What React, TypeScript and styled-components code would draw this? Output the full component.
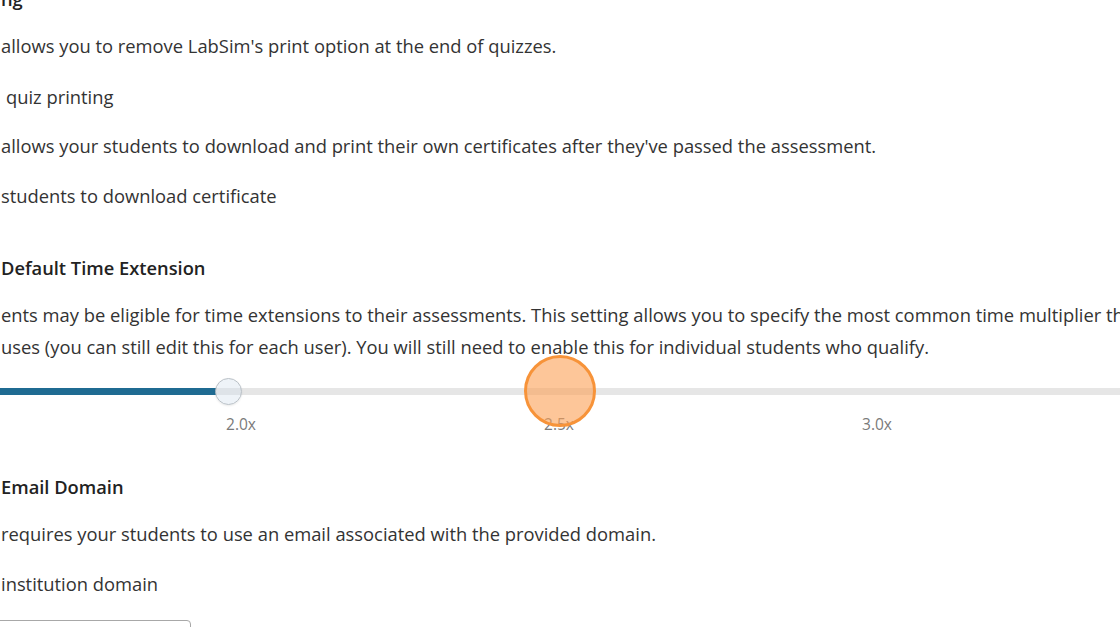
import React from 'react';
import styled, { createGlobalStyle } from 'styled-components';

const GlobalStyle = createGlobalStyle`
  html, body {
    margin: 0;
    padding: 0;
    background: #ffffff;
    overflow: hidden;
  }
  body {
    font-family: "Open Sans", "Noto Sans", sans-serif;
    color: #333333;
  }
`;

const Page = styled.div`
  width: 1120px;
  height: 627px;
  overflow: hidden;
  position: relative;
`;

const Content = styled.div`
  margin-top: -18px;
  padding-left: 1px;
  display: flex;
  flex-direction: column;
`;

const Heading = styled.h3<{ $gap?: number }>`
  margin: ${(p) => p.$gap || 0}px 0 0 0;
  font-size: 18.3px;
  font-weight: 600;
  line-height: 33px;
  color: #222222;
  white-space: nowrap;
`;

const Text = styled.p<{ $gap: number; $indent?: number }>`
  margin: ${(p) => p.$gap}px 0 0 ${(p) => p.$indent || 0}px;
  font-size: 18.35px;
  font-weight: 400;
  line-height: 33px;
  color: #333333;
  white-space: nowrap;
`;

const SliderArea = styled.div`
  position: relative;
  margin-top: 25px;
  width: 1200px;
`;

const Track = styled.div`
  position: relative;
  height: 7px;
  background: #e6e6e6;
  border-radius: 4px;
`;

const Fill = styled.div`
  position: absolute;
  left: -10px;
  top: 0;
  bottom: 0;
  background: #1f6b92;
`;

const Thumb = styled.div`
  position: absolute;
  top: 50%;
  width: 25px;
  height: 25px;
  margin: -13.5px 0 0 -13.5px;
  border-radius: 50%;
  border: 1px solid #b9c0c6;
  background: rgba(205, 222, 234, 0.35);
  box-shadow: 0 1px 2px rgba(0, 0, 0, 0.08);
`;

const Ticks = styled.div`
  display: flex;
  margin-top: 19px;
  margin-left: 81px;
`;

const Tick = styled.span`
  width: 318px;
  text-align: center;
  font-size: 15.5px;
  line-height: 20px;
  color: #7a7a7a;
`;

const Cursor = styled.div`
  position: absolute;
  width: 66px;
  height: 66px;
  border-radius: 50%;
  border: 3px solid #f79339;
  background: rgba(252, 160, 85, 0.6);
  transform: translate(-50%, -50%);
`;

const Input = styled.div`
  margin: 20px 0 0 -12px;
  width: 200px;
  height: 36px;
  border: 1px solid #a8a8a8;
  border-radius: 4px;
  background: #ffffff;
`;

const ticks = ['2.0x', '2.5x', '3.0x'];

const App = () => {
  const fillEnd = 215;
  const thumbAt = 227;

  return (
    <Page>
      <GlobalStyle />
      <Content>
        <Heading>ng</Heading>
        <Text $gap={13.5}>allows you to remove LabSim's print option at the end of quizzes.</Text>
        <Text $gap={18} $indent={5}>quiz printing</Text>
        <Text $gap={16}>allows your students to download and print their own certificates after they've passed the assessment.</Text>
        <Text $gap={17}>students to download certificate</Text>

        <Heading $gap={39}>Default Time Extension</Heading>
        <Text $gap={14}>ents may be eligible for time extensions to their assessments. This setting allows you to specify the most common time multiplier that</Text>
        <Text $gap={-1}>uses (you can still edit this for each user). You will still need to enable this for individual students who qualify.</Text>

        <SliderArea>
          <Track>
            <Fill style={{ width: fillEnd + 10 }} />
            <Thumb style={{ left: thumbAt }} />
          </Track>
          <Ticks>
            {ticks.map((t) => (
              <Tick key={t}>{t}</Tick>
            ))}
          </Ticks>
          <Cursor style={{ left: 559, top: 3 }} />
        </SliderArea>

        <Heading $gap={36}>Email Domain</Heading>
        <Text $gap={14}>requires your students to use an email associated with the provided domain.</Text>
        <Text $gap={17}>institution domain</Text>
        <Input />
      </Content>
    </Page>
  );
};

export default App;
